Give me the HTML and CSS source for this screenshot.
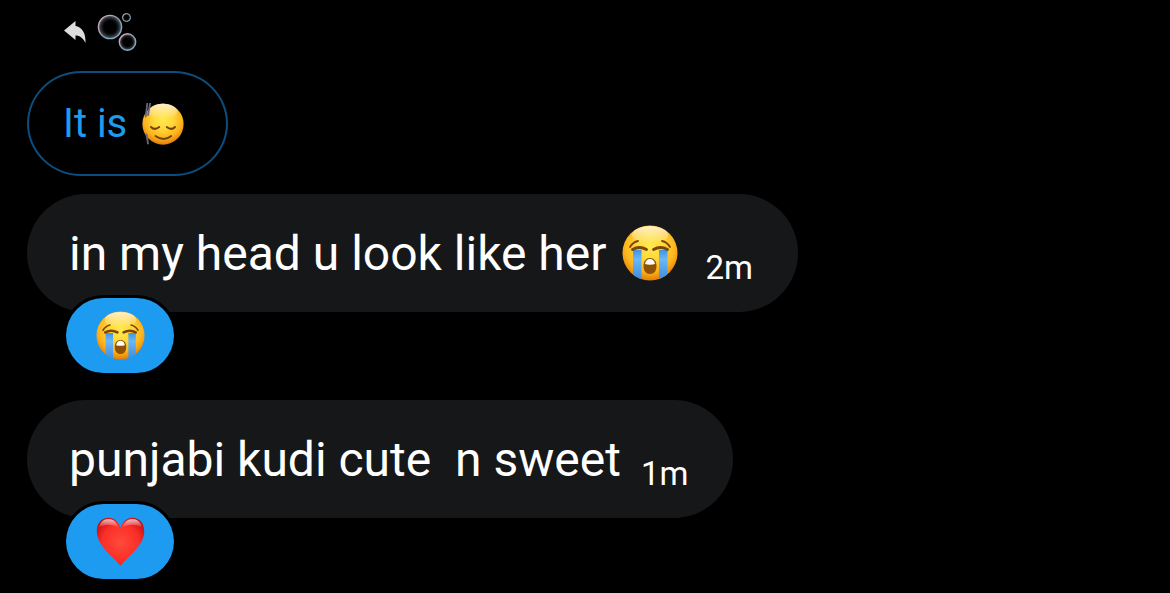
FILE: index.html
```
<!DOCTYPE html>
<html lang="en">

<head>
  <meta charset="UTF-8">
  <meta name="viewport" content="width=device-width, initial-scale=1.0">
  <title>Messages</title>
  <link rel="stylesheet" href="styles.css">
</head>

<body>
  <!-- shared icons -->
  <svg class="defs" width="0" height="0" aria-hidden="true">
    <defs>
      <radialGradient id="face" cx="50%" cy="38%" r="62%">
        <stop offset="0" stop-color="#ffe94f"/>
        <stop offset="0.4" stop-color="#ffd83a"/>
        <stop offset="0.75" stop-color="#fdb21c"/>
        <stop offset="1" stop-color="#e27c06"/>
      </radialGradient>
      <linearGradient id="shine" x1="0" y1="0" x2="0" y2="1">
        <stop offset="0" stop-color="#fff" stop-opacity="0.75"/>
        <stop offset="1" stop-color="#fff" stop-opacity="0"/>
      </linearGradient>
      <linearGradient id="tear" x1="0" y1="0" x2="0" y2="1">
        <stop offset="0" stop-color="#3f93e2"/>
        <stop offset="0.3" stop-color="#6bb8f6"/>
        <stop offset="1" stop-color="#388ade"/>
      </linearGradient>
      <radialGradient id="heart" cx="50%" cy="52%" r="60%">
        <stop offset="0" stop-color="#ff4a3a"/>
        <stop offset="0.65" stop-color="#fa2e28"/>
        <stop offset="1" stop-color="#c80d12"/>
      </radialGradient>
      <linearGradient id="film" x1="0" y1="0" x2="1" y2="1">
        <stop offset="0" stop-color="#e4b0c8"/>
        <stop offset="0.25" stop-color="#c7a3b8"/>
        <stop offset="0.5" stop-color="#8398a8"/>
        <stop offset="0.75" stop-color="#79b2cb"/>
        <stop offset="1" stop-color="#a995b2"/>
      </linearGradient>
      <radialGradient id="glow">
        <stop offset="0.5" stop-color="#283038" stop-opacity="0"/>
        <stop offset="1" stop-color="#68747e" stop-opacity="0.9"/>
      </radialGradient>
      <clipPath id="round"><circle cx="28" cy="28" r="27.5"/></clipPath>
    </defs>
    <symbol id="sob" viewBox="0 0 56 56">
      <circle cx="28" cy="28" r="27.5" fill="url(#face)"/>
      <ellipse cx="28" cy="10" rx="18" ry="9" fill="url(#shine)"/>
      <g clip-path="url(#round)">
        <path d="M11 25h8.500v31H11zM37 25h8.500v31H37z" fill="url(#tear)"/>
      </g>
      <path d="M8 22q3-5 8-6M40 16q5 1 8 6" fill="none" stroke="#7d4609" stroke-width="1.800" stroke-linecap="round"/>
      <path d="M10.500 24.500q7-4 14 0M31.500 24.500q7-4 14 0" fill="none" stroke="#7d4609" stroke-width="2.800" stroke-linecap="round"/>
      <path d="M28 33c-4 0-6.500 3-6.500 8s2.500 8 6.500 8 6.500-3 6.500-8-2.500-8-6.500-8z" fill="#8e5207"/>
      <path d="M23 39q1-5 5-5t5 5q-5 1.500-10 0z" fill="#fff"/>
    </symbol>
    <symbol id="relieved" viewBox="0 0 56 56">
      <circle cx="28" cy="28" r="27.500" fill="url(#face)"/>
      <ellipse cx="28" cy="11" rx="19" ry="10" fill="url(#shine)"/>
      <path d="M12 32q5 5 11 0M33 32q6 5 11 0M18 44q11 8 21 0" fill="none" stroke="#74420b" stroke-width="2.600" stroke-linecap="round"/>
      <path d="M7 1 5 18M11 0 8 16M6 42l2 12" fill="none" stroke="#66687f" stroke-width="2.400" stroke-linecap="round"/>
    </symbol>
    <symbol id="love" viewBox="0 0 50 50">
      <path d="M25 49.500C18 41 .8 29 .8 14.500.8 6 6 .8 13 .8c5.500 0 9.500 3.500 12 10 2.500-6.500 6.500-10 12-10 7 0 12.200 5.200 12.200 13.700C49.200 29 32 41 25 49.500z" fill="url(#heart)"/>
      <path d="M3 11C4 5 8 2 13 2c5 0 9 4 10 9-6-4-14-4-20 0zM27 11c1-5 5-9 10-9 5 0 9 3 10 9-6-4-14-4-20 0z" fill="url(#shine)"/>
    </symbol>
  </svg>

  <main class="chat">
    <header class="reply-row">
      <svg class="reply-icon" viewBox="0 0 22 22" role="img" aria-label="Replied">
        <path d="M0 9.500 11.500 0v5C18 6 22 12 21.500 22 19 17 16 14.500 11.500 14.500V19z" fill="#dedede"/>
      </svg>
      <svg class="bubbles-icon" viewBox="0 0 40 40" role="img" aria-label="Bubbles">
        <g fill="url(#glow)" stroke="url(#film)">
          <circle cx="13" cy="15" r="11.600" stroke-width="1.400"/>
          <circle cx="30.500" cy="30" r="8.200" stroke-width="1.400"/>
          <circle cx="29.500" cy="5.500" r="4" stroke-width="1"/>
        </g>
      </svg>
    </header>

    <div class="quote">
      <span>It is</span>
      <svg class="emoji-small" role="img" aria-label="Relieved face"><use href="#relieved"/></svg>
    </div>

    <article class="message">
      <div class="bubble">
        <p class="text">in my head u look like her</p>
        <svg class="emoji-large" role="img" aria-label="Crying face"><use href="#sob"/></svg>
        <time class="time">2m</time>
      </div>
      <button class="reaction" type="button" aria-label="Crying face reaction">
        <svg class="emoji"><use href="#sob"/></svg>
      </button>
    </article>

    <article class="message">
      <div class="bubble">
        <p class="text">punjabi kudi cute  n sweet</p>
        <time class="time">1m</time>
      </div>
      <button class="reaction" type="button" aria-label="Heart reaction">
        <svg class="emoji"><use href="#love"/></svg>
      </button>
    </article>
  </main>
</body>

</html>
```
FILE: styles.css
```
body {
  margin: 0;
  background-color: #000;
  color: #fff;
  font-family: Roboto, sans-serif;
}

.defs {
  position: absolute;
}

.chat {
  display: flex;
  flex-direction: column;
  align-items: flex-start;
  padding: 12px 27px;
}

.reply-row {
  display: flex;
  align-items: center;
  gap: 11px;
  height: 39px;
  margin: 0 0 20px 37px;
}

.reply-icon {
  width: 22px;
  height: 22px;
}

.bubbles-icon {
  width: 40px;
  height: 40px;
}

.quote {
  display: flex;
  align-items: center;
  gap: 15px;
  padding: 26px 42px 26px 34px;
  margin-bottom: 18px;
  border: 2px solid #0d4d7d;
  border-radius: 54px / 50%;
  color: #1d9bf0;
  font-size: 40px;
  line-height: 49px;
}

.emoji-small {
  width: 42px;
  height: 42px;
}

.message {
  display: flex;
  flex-direction: column;
  align-items: flex-start;
  margin-bottom: 27px;
}

.bubble {
  display: flex;
  align-items: center;
  padding: 28px 45px 28px 42px;
  border-radius: 60px;
  background-color: #161719;
}

.text {
  margin: 0;
  padding-top: 2px;
  font-size: 48px;
  line-height: 60px;
  white-space: pre;
}

.emoji-large {
  width: 56px;
  height: 56px;
  margin-left: 15px;
  margin-right: 8px;
}

.time {
  align-self: flex-end;
  margin-left: 20px;
  font-size: 33px;
  line-height: 32px;
}

.reaction {
  display: flex;
  align-items: center;
  justify-content: center;
  width: 108px;
  height: 75px;
  margin: -14px 0 0 39px;
  padding: 0;
  border: none;
  border-radius: 38px;
  background-color: #1d9bf0;
  box-shadow: 0 0 0 3px #000;
  cursor: pointer;
}

.emoji {
  width: 49px;
  height: 49px;
}
```
